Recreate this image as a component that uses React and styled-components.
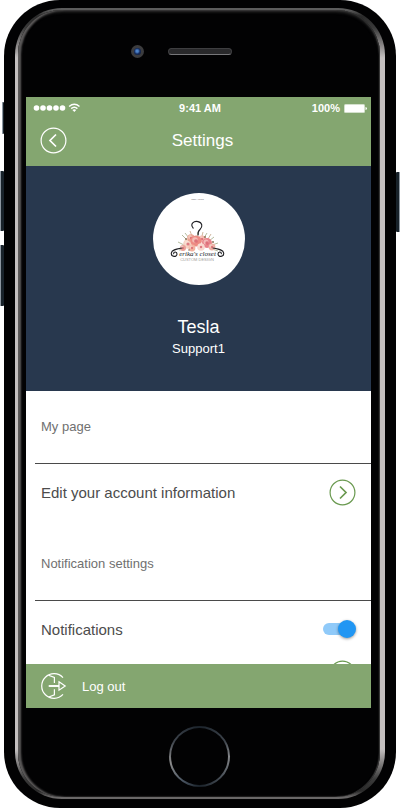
import React, { useState } from "react";
import styled, { createGlobalStyle } from "styled-components";

const green = "#84a670";
const navy = "#28384e";

const GlobalStyle = createGlobalStyle`
  *, *::before, *::after { box-sizing: border-box; }
  body {
    margin: 0;
    background: #fff;
    font-family: "Liberation Sans", Arial, sans-serif;
  }
  h1, h2, p { margin: 0; font-weight: 400; }
  svg { display: block; }
`;

const Stage = styled.div`
  display: flex;
  height: 100vh;
  padding: 0 4px;
`;

const Phone = styled.div`
  position: relative;
  display: flex;
  flex: 1;
  min-width: 0;
  padding: 8px 11px 9px;
  border-radius: 56px;
  background: #020203;
`;

const SideButton = styled.span`
  position: absolute;
  top: ${(p) => p.$top}px;
  ${(p) => p.$side}: -${(p) => p.$depth}px;
  width: ${(p) => p.$depth}px;
  height: ${(p) => p.$length}px;
  border-radius: 1px;
  background: #18222a;
  border-${(p) => p.$side}: 1px solid #8c96a0;
`;

const Rim = styled.div`
  display: flex;
  flex: 1;
  min-width: 0;
  padding: 2px 5px 2px 3px;
  border-radius: 47px;
  background: linear-gradient(
    #5c5c5c 0 2px,
    #2a2a2a 8px,
    #3a3a3a 20px,
    #c4c0c0 50px,
    #c4c0c0 calc(100% - 50px),
    #3a3a3a calc(100% - 20px),
    #2a2a2a calc(100% - 8px),
    #6a6868 calc(100% - 2px)
  );
`;

const Face = styled.div`
  display: flex;
  flex: 1;
  flex-direction: column;
  min-width: 0;
  padding: 0 9px 0 8px;
  border-radius: 44px;
  background: #020203;
  box-shadow: inset 3px 0 2px #5c5a5a, inset 0 2px 3px #2c2c2c, inset -1px 0 1px #444;
`;

const TopBezel = styled.div`
  display: grid;
  grid-template-columns: 1fr auto 1fr;
  align-items: center;
  height: 87px;
  padding: 0 0 5px 2px;
`;

const Camera = styled.span`
  justify-self: end;
  width: 13px;
  height: 13px;
  margin-right: 24px;
  border: 3px solid #3c3c3e;
  border-radius: 50%;
  background: radial-gradient(circle at 45% 45%, #4d83c9 0 20%, #172f63 50%, #07101f);
`;

const Speaker = styled.span`
  width: 64px;
  height: 7px;
  border: 1px solid #3e3e40;
  border-bottom-color: #77777a;
  border-radius: 4px;
  background: #29292b;
`;

const Screen = styled.div`
  display: flex;
  flex: 1;
  flex-direction: column;
  min-height: 0;
  background: #fff;
`;

const Header = styled.header`
  background: ${green};
  color: #fff;
`;

const StatusBar = styled.div`
  display: grid;
  grid-template-columns: 1fr auto 1fr;
  align-items: center;
  height: 22px;
  padding: 0 4px 0 7px;
  font-size: 11px;
  font-weight: 700;
`;

const Battery = styled.span`
  display: flex;
  align-items: center;
  justify-content: flex-end;
  gap: 4px;
`;

const NavBar = styled.div`
  display: grid;
  grid-template-columns: 1fr auto 1fr;
  align-items: center;
  height: 47px;
  padding: 0 14px 4px;
`;

const Title = styled.h1`
  && { padding-left: 8px; }
  font-size: 17px;
  line-height: 20px;
`;

const RoundButton = styled.button`
  display: flex;
  flex: none;
  width: 27px;
  height: 27px;
  padding: 0;
  border: 0;
  background: none;
  color: ${(p) => p.$tone};
  cursor: pointer;
`;

const Profile = styled.section`
  display: flex;
  flex: none;
  flex-direction: column;
  align-items: center;
  padding: 27px 0 32px;
  background: ${navy};
  color: #fff;
`;

const Avatar = styled.div`
  width: 92px;
  height: 92px;
  margin-bottom: 30px;
  border-radius: 50%;
  background: #fff;
  overflow: hidden;
`;

const Name = styled.h2`
  font-size: 18px;
  line-height: 24px;
`;

const Role = styled.p`
  font-size: 13px;
  line-height: 20px;
`;

const Settings = styled.main`
  flex: 1;
  min-height: 0;
  overflow: hidden;
`;

const SectionTitle = styled.h2`
  margin-left: 9px;
  padding: 0 6px;
  border-bottom: 1px solid #4a4a4a;
  color: #707070;
  font-size: 13px;
  line-height: 72px;
`;

const Rows = styled.div`
  padding: 6px 15px 14px;
`;

const Row = styled.div`
  display: flex;
  align-items: center;
  justify-content: space-between;
  height: 44px;
  color: #4c4c4c;
  font-size: 15px;
`;

const SwitchInput = styled.input`
  appearance: none;
  position: relative;
  width: 34px;
  height: 18px;
  margin: 0;
  cursor: pointer;

  &::before {
    content: "";
    position: absolute;
    inset: 3px 3px 3px 1px;
    border-radius: 6px;
    background: #c4c4c4;
  }
  &::after {
    content: "";
    position: absolute;
    top: 0;
    left: 0;
    width: 18px;
    height: 18px;
    border-radius: 50%;
    background: #fafafa;
    box-shadow: 0 1px 3px rgba(0, 0, 0, 0.4);
  }
  &:checked::before { background: #90caf9; }
  &:checked::after { left: 16px; background: #2196f3; }
`;

const Footer = styled.footer`
  flex: none;
  background: ${green};
`;

const LogOut = styled.button`
  display: flex;
  align-items: center;
  gap: 15px;
  height: 44px;
  padding: 0 15px;
  border: 0;
  background: none;
  color: #fff;
  font: 13px "Liberation Sans", Arial, sans-serif;
  cursor: pointer;
`;

const BottomBezel = styled.div`
  display: flex;
  flex: none;
  justify-content: center;
  height: 89px;
  padding: 18px 0 0 2px;
`;

const HomeRing = styled.button`
  width: 61px;
  height: 61px;
  padding: 2px;
  border: 0;
  border-radius: 50%;
  background: conic-gradient(#1b232b, #3f454d 60deg, #85878a 90deg, #4b525a 130deg, #1a222a 180deg, #4b5663 215deg, #8b8b8b 258deg, #3f454d 300deg, #1b232b);

  &::before {
    content: "";
    display: block;
    height: 100%;
    border-radius: 50%;
    background: #020203;
  }
`;

function Chevron({ back }) {
  return (
    <svg width="27" height="27" viewBox="0 0 27 27" fill="none" stroke="currentColor" aria-hidden="true">
      <circle cx="13.5" cy="13.5" r="12.4" strokeWidth="1.2" />
      <path d={back ? "M16 7.5 10 13.5 16 19.5" : "M11 7.5 17 13.5 11 19.5"} strokeWidth="1.7" />
    </svg>
  );
}

function Signal() {
  return (
    <svg width="48" height="12" viewBox="0 0 48 12" fill="none" stroke="#fff" aria-label="Signal">
      <g fill="#fff" stroke="none">
        {[3.5, 10, 16.5, 23, 29.5].map((x) => <circle key={x} cx={x} cy="6" r="2.8" />)}
      </g>
      <path d="M36.1 4.5Q41.3 0 46.5 4.5M38.2 6.6Q41.3 4 44.4 6.6" strokeWidth="1.5" />
      <path d="M39.4 8Q41.3 6.4 43.2 8L41.3 10Z" fill="#fff" stroke="none" />
    </svg>
  );
}

function LogOutIcon() {
  return (
    <svg width="26" height="26" viewBox="0 0 26 26" fill="none" stroke="currentColor" strokeWidth="1.2" aria-hidden="true">
      <path d="M22 4.6A12.3 12.3 0 1 0 22 21.4" />
      <path d="M7.5 2.2 13.4 4.5V10M13.4 16.2V21.8L7.8 24" />
      <path d="M7.7 13H18" strokeWidth="1.9" />
      <path d="M18 8.8 24.2 13 18 17.2Z" />
    </svg>
  );
}

const blossoms = [
  [35, 51, 4.8, "#f6d2c2"], [38, 45, 3.8, "#eba392"], [49, 46, 3.6, "#f4b7ac"],
  [43, 48, 5.6, "#ed8b83"], [54, 50, 5, "#e8838a"], [48, 54, 3.8, "#f8d7cd"],
  [59, 54, 3.4, "#edb1a5"], [30, 55, 3, "#e9a097"], [39, 55, 3.4, "#f3b29f"],
];

function ClosetLogo() {
  return (
    <svg width="92" height="92" viewBox="0 0 92 92" fill="none">
      <text x="44.5" y="7" textAnchor="middle" fontSize="2" fill="#666">TESLA LOGO</text>
      <g stroke="#adb494" strokeWidth="0.9">
        <path d="M34 47 29 42M36 45 32 40M51 45 54 40M56 48 61 44M59 52 65 50M31 52 25 49M44 44 45 39M32 56 26 57M59 56 65 58" />
        <path d="M39 43 37 38M49 43 50 39M55 46 58 41" stroke="#c9ae91" />
      </g>
      {blossoms.map(([x, y, r, color]) => (
        <g key={`${x}-${y}`}>
          <circle cx={x} cy={y} r={r} fill={color} />
          <circle cx={x - 1} cy={y - 1} r={r / 2} fill="#fae7df" opacity="0.55" />
          <circle cx={x} cy={y} r={r / 3} fill="#d45260" opacity="0.7" />
        </g>
      ))}
      <g fill="#8d765c">
        <circle cx="33" cy="46" r="1" /><circle cx="52" cy="44" r="1" />
        <circle cx="36" cy="57" r="0.8" /><circle cx="60" cy="49" r="1" />
      </g>
      <g stroke="#202024" strokeWidth="1.1" strokeLinecap="round">
        <path d="M40.2 35.2C36.6 31 41 27.6 45 28.6C49.4 29.6 50 34 47 36.5C45 38.2 44.6 39.5 45.2 42" />
        <path d="M29 55C24 56 18.8 56.6 18.3 60.2C18 64 23.8 64.6 24 61C24 58.4 20.5 58.4 20.7 60.7" />
        <path d="M60 55C65 56 70.2 56.6 70.7 60.2C71 64 65.2 64.6 65 61C65 58.4 68.5 58.4 68.3 60.7" />
      </g>
      <text x="44.5" y="63" textAnchor="middle" fontFamily="Liberation Serif, serif" fontStyle="italic" fontSize="7" fill="#202024">erika's closet</text>
      <text x="44" y="67.5" textAnchor="middle" fontSize="4" fill="#a09c98">CUSTOM DESIGN</text>
    </svg>
  );
}

export default function App() {
  const [notify, setNotify] = useState(true);
  return (
    <>
      <GlobalStyle />
      <Stage>
        <Phone>
          <SideButton $side="left" $top={102} $length={32} $depth={2} />
          <SideButton $side="left" $top={171} $length={60} $depth={4} />
          <SideButton $side="left" $top={245} $length={61} $depth={4} />
          <SideButton $side="right" $top={172} $length={60} $depth={4} />
          <Rim>
            <Face>
              <TopBezel><Camera /><Speaker /></TopBezel>
              <Screen>
                <Header>
                  <StatusBar>
                    <Signal />
                    <span>9:41 AM</span>
                    <Battery>
                      100%
                      <svg width="23" height="9" viewBox="0 0 23 9" fill="#fff" aria-hidden="true">
                        <rect width="21" height="9" rx="1.5" opacity="0.65" />
                        <rect x="1" y="1" width="19" height="7" rx="0.5" />
                        <path d="M21.5 3Q23 3.2 23 4.5T21.5 6Z" />
                      </svg>
                    </Battery>
                  </StatusBar>
                  <NavBar>
                    <RoundButton $tone="#fff" aria-label="Back"><Chevron back /></RoundButton>
                    <Title>Settings</Title>
                  </NavBar>
                </Header>
                <Profile>
                  <Avatar><ClosetLogo /></Avatar>
                  <Name>Tesla</Name>
                  <Role>Support1</Role>
                </Profile>
                <Settings>
                  <SectionTitle>My page</SectionTitle>
                  <Rows>
                    <Row>
                      <span id="edit-account">Edit your account information</span>
                      <RoundButton $tone="#69994f" aria-labelledby="edit-account"><Chevron /></RoundButton>
                    </Row>
                  </Rows>
                  <SectionTitle>Notification settings</SectionTitle>
                  <Rows>
                    <Row>
                      <label htmlFor="notifications">Notifications</label>
                      <SwitchInput
                        id="notifications"
                        type="checkbox"
                        role="switch"
                        checked={notify}
                        onChange={(e) => setNotify(e.target.checked)}
                      />
                    </Row>
                    <Row>
                      <span />
                      <RoundButton $tone="#69994f" aria-label="Open"><Chevron /></RoundButton>
                    </Row>
                  </Rows>
                </Settings>
                <Footer>
                  <LogOut><LogOutIcon />Log out</LogOut>
                </Footer>
              </Screen>
              <BottomBezel><HomeRing aria-label="Home" /></BottomBezel>
            </Face>
          </Rim>
        </Phone>
      </Stage>
    </>
  );
}
